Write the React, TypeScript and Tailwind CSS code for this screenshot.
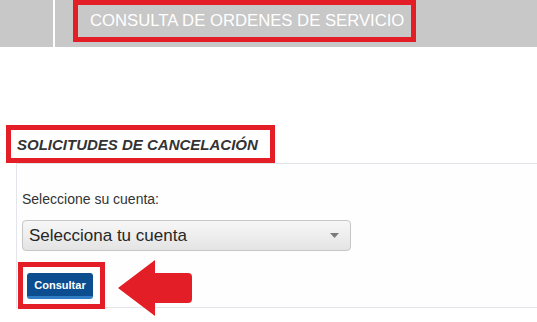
import React from "react";

export default function App() {
  return (
    <div
      className="relative w-[537px] h-[322px] overflow-hidden bg-white"
      style={{ fontFamily: '"Liberation Sans", Arial, sans-serif' }}
    >
      {/* Top bar */}
      <div className="flex h-[47px] bg-[#c8c8c8]">
        <div className="w-[53px]" />
        <div className="w-[2px] bg-white" />
        <div className="pl-[18px]">
          <div className="flex h-[42px] w-[343px] items-center border-[5px] border-[#e41e26] pl-[12px]">
            <span className="whitespace-nowrap text-[16.7px] leading-none text-white">
              CONSULTA DE ORDENES DE SERVICIO
            </span>
          </div>
        </div>
      </div>

      {/* Heading */}
      <div className="ml-[6px] mt-[78px] flex h-[38px] w-[269px] items-center border-[5px] border-[#e41e26] pl-[6px]">
        <span className="whitespace-nowrap text-[15px] font-bold italic leading-none text-[#333333]">
          SOLICITUDES DE CANCELACIÓN
        </span>
      </div>

      {/* Panel */}
      <div className="ml-[16px] h-[145px] border-l border-t border-b border-[#e2e6ea] bg-[#fefefe]">
        <div className="ml-[5px] pt-[27px] text-[14px] leading-[16px] text-[#333333]">
          Seleccione su cuenta:
        </div>
        <div className="ml-[5px] mt-[13px] flex h-[31px] w-[329px] items-center justify-between rounded-[4px] border border-[#c6c6c6] bg-gradient-to-b from-[#f7f7f7] to-[#e4e4e4] pl-[6px] pr-[11px]">
          <span className="text-[17px] leading-none text-[#262626]">Selecciona tu cuenta</span>
          <svg width="9" height="5" viewBox="0 0 9 5">
            <polygon points="0,0 9,0 4.5,5" fill="#7a7a7a" />
          </svg>
        </div>
        <div className="ml-[1px] mt-[11px] w-[87px] border-[5px] border-[#e41e26] pt-[6px] pb-[5px] pl-[4px]">
          <button className="flex h-[26px] w-[66px] items-center justify-center rounded-[3px] border-b-[3px] border-[#2f7dc4] bg-[#0b4d8e] pt-[2px] text-[11px] font-bold text-white">
            Consultar
          </button>
        </div>
      </div>

      {/* Arrow annotation */}
      <svg
        className="absolute left-[116px] top-[258px]"
        width="80"
        height="62"
        viewBox="0 0 80 62"
      >
        <path
          d="M2 30 L39 2 L39 15 L72 15 Q76 15 76 19 L76 41 Q76 45 72 45 L39 45 L39 58 Z"
          fill="#e41e26"
        />
      </svg>
    </div>
  );
}
